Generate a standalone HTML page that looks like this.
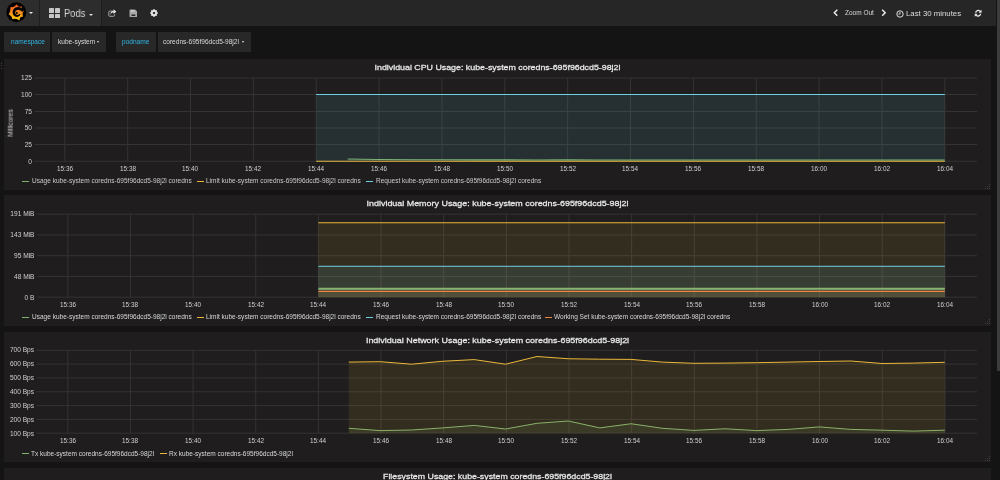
<!DOCTYPE html><html><head><meta charset="utf-8"><title>Grafana - Pods</title><style>
*{margin:0;padding:0;box-sizing:border-box}
html,body{width:1000px;height:480px;overflow:hidden;background:#141414;font-family:"Liberation Sans",sans-serif;color:#d8d9da}
.abs{position:absolute}
#nav{position:absolute;left:0;top:0;width:996.4px;height:26px;background:#262626}
#nav .sec{position:absolute;top:0;height:26px;background:#2d2d2d}
.t{position:absolute;white-space:nowrap;line-height:1}
.t,.ttl,.yl,.xl,.lg{will-change:transform}
.var{position:absolute;top:32px;height:19.5px;background:#282828;border-radius:1px}
.panel{position:absolute;left:4px;width:987px;background:#1f1d1d;overflow:hidden}
.panel svg{position:absolute;left:0;top:0}
.ttl{position:absolute;left:0;width:987px;text-align:center;white-space:nowrap;line-height:1;color:#e6e6e6;font-weight:normal;-webkit-text-stroke:0.27px #e8e8e8;transform-origin:50% 50%}
.yl{position:absolute;text-align:right;white-space:nowrap;line-height:1;color:#d0d0d0}
.xl{position:absolute;text-align:center;white-space:nowrap;line-height:1;color:#d0d0d0;width:40px}
.lg{position:absolute;white-space:nowrap;line-height:1;color:#d8d9da}
.mk{position:absolute;height:1.55px;width:7.2px}
</style></head><body>
<div id="nav">
<div class="sec" style="left:0;width:39.2px"></div>
<div class="sec" style="left:40.2px;width:60.5px"></div>
<div class="abs" style="left:39.2px;top:0;width:1px;height:26px;background:#1f1f1f"></div><div class="abs" style="left:100.5px;top:0;width:1px;height:26px;background:#1c1c1c"></div>
<svg class="abs" style="left:0;top:0" width="40" height="26" viewBox="0 0 40 26"><defs><linearGradient id="lg1" gradientUnits="userSpaceOnUse" x1="0" y1="4" x2="0" y2="21"><stop offset="0" stop-color="#f0562a"/><stop offset="0.5" stop-color="#f78d1e"/><stop offset="1" stop-color="#fdd60a"/></linearGradient></defs><circle cx="16.3" cy="12.2" r="10" fill="#000"/><path fill="url(#lg1)" d="M16.73 4.21 L14.75 6.19 L12.94 6.94 L10.35 7.15 L10.36 9.87 L9.83 11.92 L8.7 14.25 L10.61 15.64 L11.72 17.11 L12.57 19.23 L14.93 18.85 L16.89 18.97 L19.48 20.38 L19.99 17.85 L21.09 16.89 L23.05 16.4 L22.54 14.31 L22.8 12.71 L23.93 10.88 L22.26 9.9 L21.6 8.73 L21.89 6.5 L19.53 6.86 L18.11 6.26z"/><path d="M23.43 11.42 L23.31 10.88 L23.14 10.36 L22.93 9.85 L22.67 9.35 L22.37 8.88 L22 8.47 L21.56 8.13 L21.09 7.84 L20.61 7.59 L20.11 7.39 L19.6 7.24 L19.09 7.13 L18.58 7.07 L18.07 7.06 L17.57 7.09 L17.08 7.16 L16.6 7.25 L16.13 7.38 L15.69 7.56 L15.26 7.76 L14.86 8.01 L14.49 8.28 L14.15 8.59 L13.84 8.92 L13.56 9.27 L13.31 9.64 L13.1 10.02 L12.93 10.42 L12.8 10.83 L12.7 11.25 L12.65 11.66 L12.63 12.08 L12.64 12.49 L12.68 12.89 L12.74 13.29 L12.83 13.67 L12.95 14.05 L13.11 14.41 L13.29 14.76 L13.5 15.08 L13.74 15.39 L14.01 15.67 L14.29 15.92 L14.6 16.15 L14.92 16.35 L15.26 16.52 L15.6 16.66 L15.96 16.76 L16.32 16.84 L16.69 16.88 L17.05 16.89 L17.41 16.85 L17.77 16.77 L18.1 16.66 L18.43 16.51 L18.73 16.34 L19.01 16.15 L19.28 15.94 L19.51 15.71 L19.73 15.46 L19.91 15.19 L20.07 14.92 L20.2 14.64 L20.31 14.35 L20.39 14.05 L19.51 13.68 L19.4 13.86 L19.28 14.03 L19.14 14.19 L18.99 14.33 L18.83 14.46 L18.66 14.57 L18.48 14.67 L18.3 14.75 L18.11 14.81 L17.92 14.86 L17.73 14.88 L17.54 14.89 L17.35 14.89 L17.16 14.87 L16.97 14.85 L16.79 14.8 L16.61 14.75 L16.44 14.67 L16.28 14.59 L16.13 14.49 L15.99 14.37 L15.85 14.25 L15.73 14.12 L15.62 13.97 L15.53 13.82 L15.45 13.66 L15.38 13.49 L15.33 13.32 L15.29 13.15 L15.27 12.98 L15.27 12.8 L15.25 12.62 L15.23 12.44 L15.22 12.26 L15.23 12.07 L15.26 11.88 L15.31 11.69 L15.38 11.5 L15.46 11.32 L15.56 11.14 L15.68 10.97 L15.82 10.8 L15.97 10.65 L16.14 10.51 L16.32 10.39 L16.52 10.27 L16.73 10.18 L16.95 10.1 L17.18 10.05 L17.41 9.98 L17.67 9.91 L17.93 9.87 L18.2 9.85 L18.49 9.86 L18.77 9.9 L19.06 9.97 L19.35 10.06 L19.64 10.19 L19.92 10.35 L20.26 10.48 L20.64 10.63 L21.02 10.82 L21.38 11.07 L21.73 11.37 L22.06 11.71z" fill="#000"/><circle cx="16.8" cy="13" r="1.05" fill="#000"/></svg>
<div class="abs" style="left:28.5px;top:11.7px;width:0;height:0;border-left:2.2px solid transparent;border-right:2.2px solid transparent;border-top:2.4px solid #e8e8e8"></div>
<div class="abs" style="left:49px;top:8.2px;width:4.8px;height:4.5px;background:#c6c6c6;border-radius:.6px"></div>
<div class="abs" style="left:54.9px;top:8.2px;width:4.8px;height:4.5px;background:#c6c6c6;border-radius:.6px"></div>
<div class="abs" style="left:49px;top:13.5px;width:4.8px;height:4.5px;background:#c6c6c6;border-radius:.6px"></div>
<div class="abs" style="left:54.9px;top:13.5px;width:4.8px;height:4.5px;background:#c6c6c6;border-radius:.6px"></div>
<div class="t" id="pods" style="left:63.9px;top:9px;font-size:10.2px;color:#d8d8d8;transform:scaleX(0.915);transform-origin:0 0">Pods</div>
<div class="abs" style="left:89.4px;top:13.7px;width:0;height:0;border-left:2.1px solid transparent;border-right:2.1px solid transparent;border-top:2.5px solid #e0e0e0"></div>
<svg class="abs" style="left:107.6px;top:8.5px" width="8.6" height="8.2" viewBox="0 0 17.2 16.4"><path d="M9.2 4.2 H3.4 Q1.6 4.2 1.6 6 V12.8 Q1.6 14.6 3.4 14.6 H11.4 Q13.2 14.6 13.2 12.8 V10.6" fill="none" stroke="#adadad" stroke-width="1.9"/><path d="M11 0.6 L16.8 5.2 L11 9.8 V7 C8 7 6.2 8.2 5.2 11.4 C4.6 6.6 7 3.6 11 3.4z" fill="#e2e2e2"/></svg>
<svg class="abs" style="left:128.8px;top:8.7px" width="8.7" height="8.4" viewBox="0 0 17.4 16.8"><path fill-rule="evenodd" d="M2.4 0.8 H12 L16.6 5 V14.6 Q16.6 16 15.2 16 H2.4 Q1 16 1 14.6 V2.2 Q1 0.8 2.4 0.8z M5 11 V14 H12.6 V11z" fill="#a6a6a6"/><path d="M4.6 2.2 h7 v3.6 h-7z" fill="#d4d4d4"/><path d="M9 2.8 h1.6 v2.4 h-1.6z" fill="#777"/></svg>
<svg class="abs" style="left:149.9px;top:9.1px" width="8" height="8" viewBox="0 0 18 18"><path fill-rule="evenodd" d="M17.39 7.12 L17.39 10.88 L14.71 11.41 L14.75 11.33 L16.26 13.61 L13.61 16.26 L11.33 14.75 L11.41 14.71 L10.88 17.39 L7.12 17.39 L6.59 14.71 L6.67 14.75 L4.39 16.26 L1.74 13.61 L3.25 11.33 L3.29 11.41 L0.61 10.88 L0.61 7.12 L3.29 6.59 L3.25 6.67 L1.74 4.39 L4.39 1.74 L6.67 3.25 L6.59 3.29 L7.12 0.61 L10.88 0.61 L11.41 3.29 L11.33 3.25 L13.61 1.74 L16.26 4.39 L14.75 6.67 L14.71 6.59z M9 6.2 a2.8 2.8 0 1 0 .01 0z" fill="#e6e6e6"/></svg>
<svg class="abs" style="left:832.5px;top:9px" width="5.5" height="7.4" viewBox="0 0 11 15"><path d="M8.6 1.4 L2.6 7.5 8.6 13.6" fill="none" stroke="#ececec" stroke-width="3"/></svg>
<div class="t" id="zoomout" style="left:844.8px;top:9.7px;font-size:6.5px;color:#d8d8d8">Zoom Out</div>
<svg class="abs" style="left:880.8px;top:9px" width="5.5" height="7.4" viewBox="0 0 11 15"><path d="M2.4 1.4 L8.4 7.5 2.4 13.6" fill="none" stroke="#ececec" stroke-width="3"/></svg>
<svg class="abs" style="left:896px;top:9.6px" width="8" height="8" viewBox="0 0 16 16"><circle cx="8" cy="8" r="6.4" fill="none" stroke="#e0e0e0" stroke-width="2"/><path d="M8 4 v4.4 h-3" fill="none" stroke="#e0e0e0" stroke-width="1.8"/></svg>
<div class="t" id="last30" style="left:906.3px;top:9.8px;font-size:7.8px;color:#dedede">Last 30 minutes</div>
<svg class="abs" style="left:974.4px;top:8.9px" width="8.3" height="8.5" viewBox="0 0 16 16" preserveAspectRatio="none"><path d="M2 7 A6.2 6.2 0 0 1 12.6 3.4 L14.6 1.4 V7 H9 L11 5 A3.9 3.9 0 0 0 4.4 7z" fill="#ececec"/><path d="M14 9 A6.2 6.2 0 0 1 3.4 12.6 L1.4 14.6 V9 H7 L5 11 A3.9 3.9 0 0 0 11.6 9z" fill="#ececec"/></svg>
</div>
<div class="var" style="left:4px;width:46.2px"></div>
<div class="t" id="v1" style="left:10.5px;top:38.6px;font-size:6.57px;color:#33b5e5">namespace</div>
<div class="var" style="left:52.2px;width:54px"></div>
<div class="t" id="v2" style="left:57.6px;top:38.6px;font-size:6.57px;color:#d8d9da">kube-system</div>
<div class="abs" style="left:97.2px;top:41.4px;width:0;height:0;border-left:1.8px solid transparent;border-right:1.8px solid transparent;border-top:2px solid #e0e0e0"></div>
<div class="var" style="left:116px;width:39.8px"></div>
<div class="t" id="v3" style="left:122px;top:38.6px;font-size:6.57px;color:#33b5e5">podname</div>
<div class="var" style="left:157.9px;width:92.8px"></div>
<div class="t" id="v4" style="left:163.2px;top:38.6px;font-size:6.57px;color:#d8d9da">coredns-695f96dcd5-98j2l</div>
<div class="abs" style="left:242px;top:41.4px;width:0;height:0;border-left:1.8px solid transparent;border-right:1.8px solid transparent;border-top:2px solid #e0e0e0"></div>
<div class="abs" style="left:1.2px;top:62.8px;width:1.2px;height:1.2px;background:#484848"></div>
<div class="abs" style="left:1.2px;top:65.2px;width:1.2px;height:1.2px;background:#484848"></div>
<div class="abs" style="left:1.2px;top:67.6px;width:1.2px;height:1.2px;background:#484848"></div>
<div class="panel" id="p1" style="top:59px;height:131px">
<svg width="987" height="131" viewBox="0 0 987 131"><g><rect x="30.5" y="18.5" width="942.5" height="1" fill="#353333"/><rect x="30.5" y="35" width="942.5" height="1" fill="#353333"/><rect x="30.5" y="52" width="942.5" height="1" fill="#353333"/><rect x="30.5" y="68.5" width="942.5" height="1" fill="#353333"/><rect x="30.5" y="85" width="942.5" height="1" fill="#353333"/><rect x="30.5" y="101.75" width="942.5" height="1" fill="#353333"/><rect x="60.3" y="18.5" width="1" height="84.25" fill="#353333"/><rect x="123.16" y="18.5" width="1" height="84.25" fill="#353333"/><rect x="186.02" y="18.5" width="1" height="84.25" fill="#353333"/><rect x="248.88" y="18.5" width="1" height="84.25" fill="#353333"/><rect x="311.74" y="18.5" width="1" height="84.25" fill="#353333"/><rect x="374.6" y="18.5" width="1" height="84.25" fill="#353333"/><rect x="437.46" y="18.5" width="1" height="84.25" fill="#353333"/><rect x="500.32" y="18.5" width="1" height="84.25" fill="#353333"/><rect x="563.18" y="18.5" width="1" height="84.25" fill="#353333"/><rect x="626.04" y="18.5" width="1" height="84.25" fill="#353333"/><rect x="688.9" y="18.5" width="1" height="84.25" fill="#353333"/><rect x="751.76" y="18.5" width="1" height="84.25" fill="#353333"/><rect x="814.62" y="18.5" width="1" height="84.25" fill="#353333"/><rect x="877.48" y="18.5" width="1" height="84.25" fill="#353333"/><rect x="940.34" y="18.5" width="1" height="84.25" fill="#353333"/></g><path d="M343.7 100 L375.12 100.5 L406.54 100.7 L437.96 100.8 L469.38 100.9 L500.8 100.9 L532.22 101 L563.64 100.9 L595.06 101 L626.48 101 L657.9 101 L689.32 101 L720.74 101 L752.16 101 L783.58 101 L815 101 L846.42 101 L877.84 101 L909.26 101 L940.68 101 L940.68 102.25 L343.7 102.25 z" fill="#7eb26d" fill-opacity="0.1"/><path d="M343.7 100 L375.12 100.5 L406.54 100.7 L437.96 100.8 L469.38 100.9 L500.8 100.9 L532.22 101 L563.64 100.9 L595.06 101 L626.48 101 L657.9 101 L689.32 101 L720.74 101 L752.16 101 L783.58 101 L815 101 L846.42 101 L877.84 101 L909.26 101 L940.68 101" fill="none" stroke="#7eb26d" stroke-width="1.1" stroke-linejoin="round"/><path d="M312.2 102.25 L940.85 102.25 L940.85 102.25 L312.2 102.25 z" fill="#eab839" fill-opacity="0.1"/><path d="M312.2 102.25 L940.85 102.25" fill="none" stroke="#eab839" stroke-width="1" stroke-linejoin="round"/><path d="M312.2 35.5 L940.85 35.5 L940.85 102.25 L312.2 102.25 z" fill="#6ed0e0" fill-opacity="0.1"/><path d="M312.2 35.5 L940.85 35.5" fill="none" stroke="#6ed0e0" stroke-width="1" stroke-linejoin="round"/></svg>
<div class="ttl" style="top:4.75px;font-size:7.9px;transform:scaleX(1.1191)"><span>Individual CPU Usage: kube-system coredns-695f96dcd5-98j2l</span></div>
<div class="yl" style="left:0;width:28px;top:15.9px;font-size:6.6px">125</div>
<div class="yl" style="left:0;width:28px;top:33.1px;font-size:6.6px">100</div>
<div class="yl" style="left:0;width:28px;top:49.7px;font-size:6.6px">75</div>
<div class="yl" style="left:0;width:28px;top:65.9px;font-size:6.6px">50</div>
<div class="yl" style="left:0;width:28px;top:83.1px;font-size:6.6px">25</div>
<div class="yl" style="left:0;width:28px;top:99.65px;font-size:6.6px">0</div>
<div class="xl" style="left:40.7px;top:106.8px;font-size:6.4px">15:36</div>
<div class="xl" style="left:103.56px;top:106.8px;font-size:6.4px">15:38</div>
<div class="xl" style="left:166.42px;top:106.8px;font-size:6.4px">15:40</div>
<div class="xl" style="left:229.28px;top:106.8px;font-size:6.4px">15:42</div>
<div class="xl" style="left:292.14px;top:106.8px;font-size:6.4px">15:44</div>
<div class="xl" style="left:355px;top:106.8px;font-size:6.4px">15:46</div>
<div class="xl" style="left:417.86px;top:106.8px;font-size:6.4px">15:48</div>
<div class="xl" style="left:480.72px;top:106.8px;font-size:6.4px">15:50</div>
<div class="xl" style="left:543.58px;top:106.8px;font-size:6.4px">15:52</div>
<div class="xl" style="left:606.44px;top:106.8px;font-size:6.4px">15:54</div>
<div class="xl" style="left:669.3px;top:106.8px;font-size:6.4px">15:56</div>
<div class="xl" style="left:732.16px;top:106.8px;font-size:6.4px">15:58</div>
<div class="xl" style="left:795.02px;top:106.8px;font-size:6.4px">16:00</div>
<div class="xl" style="left:857.88px;top:106.8px;font-size:6.4px">16:02</div>
<div class="xl" style="left:920.74px;top:106.8px;font-size:6.4px">16:04</div>
<div class="mk" style="left:18px;top:121.6px;background:#7eb26d"></div>
<div class="lg" style="left:27.8px;top:118.5px;font-size:6.52px;color:#cbcbcb">Usage kube-system coredns-695f96dcd5-98j2l coredns</div>
<div class="mk" style="left:192.5px;top:121.6px;background:#eab839"></div>
<div class="lg" style="left:202px;top:118.5px;font-size:6.52px;color:#cbcbcb">Limit kube-system coredns-695f96dcd5-98j2l coredns</div>
<div class="mk" style="left:361.9px;top:121.6px;background:#6ed0e0"></div>
<div class="lg" style="left:371.6px;top:118.5px;font-size:6.52px;color:#cbcbcb">Request kube-system coredns-695f96dcd5-98j2l coredns</div>
<div class="t" style="left:6.6px;top:64px;font-size:6.6px;color:#d0d0d0;transform:translate(-50%,-50%) rotate(-90deg)">Millicores</div>
<div class="abs" style="left:984.5px;top:124.5px;width:1px;height:1px;background:#403e3e"></div><div class="abs" style="left:984.5px;top:126.5px;width:1px;height:1px;background:#403e3e"></div><div class="abs" style="left:984.5px;top:128.5px;width:1px;height:1px;background:#403e3e"></div><div class="abs" style="left:982.5px;top:126.5px;width:1px;height:1px;background:#403e3e"></div><div class="abs" style="left:982.5px;top:128.5px;width:1px;height:1px;background:#403e3e"></div><div class="abs" style="left:980.5px;top:128.5px;width:1px;height:1px;background:#403e3e"></div>
</div>
<div class="panel" id="p2" style="top:195.3px;height:130.7px">
<svg width="987" height="130.7" viewBox="0 0 987 130.7"><g><rect x="33" y="18.7" width="940" height="1" fill="#353333"/><rect x="33" y="39.45" width="940" height="1" fill="#353333"/><rect x="33" y="60.2" width="940" height="1" fill="#353333"/><rect x="33" y="80.95" width="940" height="1" fill="#353333"/><rect x="33" y="101.7" width="940" height="1" fill="#353333"/><rect x="63.3" y="18.7" width="1" height="84" fill="#353333"/><rect x="125.95" y="18.7" width="1" height="84" fill="#353333"/><rect x="188.6" y="18.7" width="1" height="84" fill="#353333"/><rect x="251.25" y="18.7" width="1" height="84" fill="#353333"/><rect x="313.9" y="18.7" width="1" height="84" fill="#353333"/><rect x="376.55" y="18.7" width="1" height="84" fill="#353333"/><rect x="439.2" y="18.7" width="1" height="84" fill="#353333"/><rect x="501.85" y="18.7" width="1" height="84" fill="#353333"/><rect x="564.5" y="18.7" width="1" height="84" fill="#353333"/><rect x="627.15" y="18.7" width="1" height="84" fill="#353333"/><rect x="689.8" y="18.7" width="1" height="84" fill="#353333"/><rect x="752.45" y="18.7" width="1" height="84" fill="#353333"/><rect x="815.1" y="18.7" width="1" height="84" fill="#353333"/><rect x="877.75" y="18.7" width="1" height="84" fill="#353333"/><rect x="940.4" y="18.7" width="1" height="84" fill="#353333"/></g><path d="M314.4 93.8 L940.9 93.8 L940.9 102.2 L314.4 102.2 z" fill="#7eb26d" fill-opacity="0.1"/><path d="M314.4 93.8 L940.9 93.8" fill="none" stroke="#7eb26d" stroke-width="1.9" stroke-linejoin="round"/><path d="M314.4 27.7 L940.9 27.7 L940.9 102.2 L314.4 102.2 z" fill="#eab839" fill-opacity="0.1"/><path d="M314.4 27.7 L940.9 27.7" fill="none" stroke="#eab839" stroke-width="1.1" stroke-linejoin="round"/><path d="M314.4 71.3 L940.9 71.3 L940.9 102.2 L314.4 102.2 z" fill="#6ed0e0" fill-opacity="0.1"/><path d="M314.4 71.3 L940.9 71.3" fill="none" stroke="#6ed0e0" stroke-width="1" stroke-linejoin="round"/><path d="M314.4 96.4 L940.9 96.4 L940.9 102.2 L314.4 102.2 z" fill="#ef843c" fill-opacity="0.1"/><path d="M314.4 96.4 L940.9 96.4" fill="none" stroke="#ef843c" stroke-width="1.3" stroke-linejoin="round"/></svg>
<div class="ttl" style="top:5.15px;font-size:7.9px;transform:scaleX(1.1309)"><span>Individual Memory Usage: kube-system coredns-695f96dcd5-98j2l</span></div>
<div class="yl" style="left:0;width:30.5px;top:16.1px;font-size:6.6px">191 MiB</div>
<div class="yl" style="left:0;width:30.5px;top:36.85px;font-size:6.6px">143 MiB</div>
<div class="yl" style="left:0;width:30.5px;top:57.9px;font-size:6.6px">95 MiB</div>
<div class="yl" style="left:0;width:30.5px;top:78.45px;font-size:6.6px">48 MiB</div>
<div class="yl" style="left:0;width:30.5px;top:99.8px;font-size:6.6px">0 B</div>
<div class="xl" style="left:43.7px;top:106.75px;font-size:6.4px">15:36</div>
<div class="xl" style="left:106.35px;top:106.75px;font-size:6.4px">15:38</div>
<div class="xl" style="left:169px;top:106.75px;font-size:6.4px">15:40</div>
<div class="xl" style="left:231.65px;top:106.75px;font-size:6.4px">15:42</div>
<div class="xl" style="left:294.3px;top:106.75px;font-size:6.4px">15:44</div>
<div class="xl" style="left:356.95px;top:106.75px;font-size:6.4px">15:46</div>
<div class="xl" style="left:419.6px;top:106.75px;font-size:6.4px">15:48</div>
<div class="xl" style="left:482.25px;top:106.75px;font-size:6.4px">15:50</div>
<div class="xl" style="left:544.9px;top:106.75px;font-size:6.4px">15:52</div>
<div class="xl" style="left:607.55px;top:106.75px;font-size:6.4px">15:54</div>
<div class="xl" style="left:670.2px;top:106.75px;font-size:6.4px">15:56</div>
<div class="xl" style="left:732.85px;top:106.75px;font-size:6.4px">15:58</div>
<div class="xl" style="left:795.5px;top:106.75px;font-size:6.4px">16:00</div>
<div class="xl" style="left:858.15px;top:106.75px;font-size:6.4px">16:02</div>
<div class="xl" style="left:920.8px;top:106.75px;font-size:6.4px">16:04</div>
<div class="mk" style="left:18px;top:121.35px;background:#7eb26d"></div>
<div class="lg" style="left:27.8px;top:118.9px;font-size:6.52px;color:#d8d9da">Usage kube-system coredns-695f96dcd5-98j2l coredns</div>
<div class="mk" style="left:192.5px;top:121.35px;background:#eab839"></div>
<div class="lg" style="left:202px;top:118.9px;font-size:6.52px;color:#d8d9da">Limit kube-system coredns-695f96dcd5-98j2l coredns</div>
<div class="mk" style="left:361.9px;top:121.35px;background:#6ed0e0"></div>
<div class="lg" style="left:371.6px;top:118.9px;font-size:6.52px;color:#d8d9da">Request kube-system coredns-695f96dcd5-98j2l coredns</div>
<div class="mk" style="left:541px;top:121.35px;background:#ef843c"></div>
<div class="lg" style="left:550.2px;top:118.9px;font-size:6.52px;color:#d8d9da">Working Set kube-system coredns-695f96dcd5-98j2l coredns</div>
<div class="abs" style="left:984.5px;top:124.2px;width:1px;height:1px;background:#403e3e"></div><div class="abs" style="left:984.5px;top:126.2px;width:1px;height:1px;background:#403e3e"></div><div class="abs" style="left:984.5px;top:128.2px;width:1px;height:1px;background:#403e3e"></div><div class="abs" style="left:982.5px;top:126.2px;width:1px;height:1px;background:#403e3e"></div><div class="abs" style="left:982.5px;top:128.2px;width:1px;height:1px;background:#403e3e"></div><div class="abs" style="left:980.5px;top:128.2px;width:1px;height:1px;background:#403e3e"></div>
</div>
<div class="panel" id="p3" style="top:332px;height:130px">
<svg width="987" height="130" viewBox="0 0 987 130"><g><rect x="32.2" y="17.8" width="940.8" height="1" fill="#353333"/><rect x="32.2" y="31.6" width="940.8" height="1" fill="#353333"/><rect x="32.2" y="45.4" width="940.8" height="1" fill="#353333"/><rect x="32.2" y="59.25" width="940.8" height="1" fill="#353333"/><rect x="32.2" y="73.1" width="940.8" height="1" fill="#353333"/><rect x="32.2" y="86.9" width="940.8" height="1" fill="#353333"/><rect x="32.2" y="100.7" width="940.8" height="1" fill="#353333"/><rect x="63.3" y="17.8" width="1" height="83.9" fill="#353333"/><rect x="125.95" y="17.8" width="1" height="83.9" fill="#353333"/><rect x="188.6" y="17.8" width="1" height="83.9" fill="#353333"/><rect x="251.25" y="17.8" width="1" height="83.9" fill="#353333"/><rect x="313.9" y="17.8" width="1" height="83.9" fill="#353333"/><rect x="376.55" y="17.8" width="1" height="83.9" fill="#353333"/><rect x="439.2" y="17.8" width="1" height="83.9" fill="#353333"/><rect x="501.85" y="17.8" width="1" height="83.9" fill="#353333"/><rect x="564.5" y="17.8" width="1" height="83.9" fill="#353333"/><rect x="627.15" y="17.8" width="1" height="83.9" fill="#353333"/><rect x="689.8" y="17.8" width="1" height="83.9" fill="#353333"/><rect x="752.45" y="17.8" width="1" height="83.9" fill="#353333"/><rect x="815.1" y="17.8" width="1" height="83.9" fill="#353333"/><rect x="877.75" y="17.8" width="1" height="83.9" fill="#353333"/><rect x="940.4" y="17.8" width="1" height="83.9" fill="#353333"/></g><path d="M344.75 96.3 L376.12 98.6 L407.49 98 L438.86 95.9 L470.23 93.4 L501.6 97 L532.97 91.3 L564.34 89 L595.71 95.9 L627.08 91.75 L658.45 96.3 L689.82 98.4 L721.19 96.75 L752.56 98.6 L783.93 97.4 L815.3 94.9 L846.67 97.4 L878.04 98.2 L909.41 99.1 L940.78 98.2 L940.78 101.2 L344.75 101.2 z" fill="#7eb26d" fill-opacity="0.1"/><path d="M344.75 96.3 L376.12 98.6 L407.49 98 L438.86 95.9 L470.23 93.4 L501.6 97 L532.97 91.3 L564.34 89 L595.71 95.9 L627.08 91.75 L658.45 96.3 L689.82 98.4 L721.19 96.75 L752.56 98.6 L783.93 97.4 L815.3 94.9 L846.67 97.4 L878.04 98.2 L909.41 99.1 L940.78 98.2" fill="none" stroke="#7eb26d" stroke-width="1" stroke-linejoin="round"/><path d="M344.75 30.1 L376.12 29.7 L407.49 32.2 L438.86 29.25 L470.23 27.6 L501.6 32.2 L532.97 24.5 L564.34 26.75 L595.71 27.2 L627.08 27.4 L658.45 30.1 L689.82 31.3 L721.19 31.1 L752.56 30.7 L783.93 30.1 L815.3 29.5 L846.67 29 L878.04 31.5 L909.41 31.1 L940.78 30.3 L940.78 101.2 L344.75 101.2 z" fill="#eab839" fill-opacity="0.1"/><path d="M344.75 30.1 L376.12 29.7 L407.49 32.2 L438.86 29.25 L470.23 27.6 L501.6 32.2 L532.97 24.5 L564.34 26.75 L595.71 27.2 L627.08 27.4 L658.45 30.1 L689.82 31.3 L721.19 31.1 L752.56 30.7 L783.93 30.1 L815.3 29.5 L846.67 29 L878.04 31.5 L909.41 31.1 L940.78 30.3" fill="none" stroke="#eab839" stroke-width="1" stroke-linejoin="round"/></svg>
<div class="ttl" style="top:4.8px;font-size:7.9px;transform:scaleX(1.1344)"><span>Individual Network Usage: kube-system coredns-695f96dcd5-98j2l</span></div>
<div class="yl" style="left:0;width:30.1px;top:15.4px;font-size:6.6px">700 Bps</div>
<div class="yl" style="left:0;width:30.1px;top:29.2px;font-size:6.6px">600 Bps</div>
<div class="yl" style="left:0;width:30.1px;top:42.8px;font-size:6.6px">500 Bps</div>
<div class="yl" style="left:0;width:30.1px;top:57.35px;font-size:6.6px">400 Bps</div>
<div class="yl" style="left:0;width:30.1px;top:71.2px;font-size:6.6px">300 Bps</div>
<div class="yl" style="left:0;width:30.1px;top:85px;font-size:6.6px">200 Bps</div>
<div class="yl" style="left:0;width:30.1px;top:98.8px;font-size:6.6px">100 Bps</div>
<div class="xl" style="left:43.7px;top:106px;font-size:6.4px">15:36</div>
<div class="xl" style="left:106.35px;top:106px;font-size:6.4px">15:38</div>
<div class="xl" style="left:169px;top:106px;font-size:6.4px">15:40</div>
<div class="xl" style="left:231.65px;top:106px;font-size:6.4px">15:42</div>
<div class="xl" style="left:294.3px;top:106px;font-size:6.4px">15:44</div>
<div class="xl" style="left:356.95px;top:106px;font-size:6.4px">15:46</div>
<div class="xl" style="left:419.6px;top:106px;font-size:6.4px">15:48</div>
<div class="xl" style="left:482.25px;top:106px;font-size:6.4px">15:50</div>
<div class="xl" style="left:544.9px;top:106px;font-size:6.4px">15:52</div>
<div class="xl" style="left:607.55px;top:106px;font-size:6.4px">15:54</div>
<div class="xl" style="left:670.2px;top:106px;font-size:6.4px">15:56</div>
<div class="xl" style="left:732.85px;top:106px;font-size:6.4px">15:58</div>
<div class="xl" style="left:795.5px;top:106px;font-size:6.4px">16:00</div>
<div class="xl" style="left:858.15px;top:106px;font-size:6.4px">16:02</div>
<div class="xl" style="left:920.8px;top:106px;font-size:6.4px">16:04</div>
<div class="mk" style="left:18px;top:120.8px;background:#7eb26d"></div>
<div class="lg" style="left:27.3px;top:118.8px;font-size:6.52px;color:#d8d9da">Tx kube-system coredns-695f96dcd5-98j2l</div>
<div class="mk" style="left:155.8px;top:120.8px;background:#eab839"></div>
<div class="lg" style="left:165px;top:118.8px;font-size:6.52px;color:#d8d9da">Rx kube-system coredns-695f96dcd5-98j2l</div>
<div class="abs" style="left:984.5px;top:123.5px;width:1px;height:1px;background:#403e3e"></div><div class="abs" style="left:984.5px;top:125.5px;width:1px;height:1px;background:#403e3e"></div><div class="abs" style="left:984.5px;top:127.5px;width:1px;height:1px;background:#403e3e"></div><div class="abs" style="left:982.5px;top:125.5px;width:1px;height:1px;background:#403e3e"></div><div class="abs" style="left:982.5px;top:127.5px;width:1px;height:1px;background:#403e3e"></div><div class="abs" style="left:980.5px;top:127.5px;width:1px;height:1px;background:#403e3e"></div>
</div>
<div class="panel" id="p4" style="top:468.3px;height:20px"><div class="ttl" style="top:4.9px;font-size:7.9px;transform:scaleX(1.1153)"><span>Filesystem Usage: kube-system coredns-695f96dcd5-98j2l</span></div></div>
<div class="abs" style="left:996.8px;top:0;width:3.2px;height:371px;background:#3c3c3c"></div>
</body></html>
